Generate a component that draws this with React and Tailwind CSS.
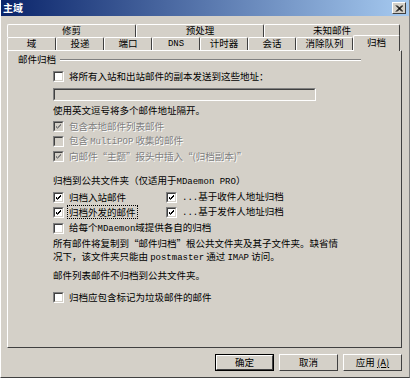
import React from 'react';

const Check = ({ checked, disabled }) => (
    <span
        className={`relative inline-block w-[11px] h-[11px] shrink-0 border border-t-[#808080] border-l-[#808080] border-b-white border-r-white ${disabled ? 'bg-[#d4d0c8]' : 'bg-white'}`}
    >
        <span className="absolute inset-0 border border-t-[#404040] border-l-[#404040] border-b-[#d4d0c8] border-r-[#d4d0c8]" />
        {checked && (
            <svg viewBox="0 0 9 9" className="absolute left-0 top-0 w-[9px] h-[9px]">
                <path
                    d="M2 4 L3.5 5.5 L7 2 M2 5 L3.5 6.5 L7 3"
                    fill="none"
                    stroke={disabled ? '#808080' : '#000'}
                    strokeWidth="1"
                />
            </svg>
        )}
    </span>
);

const Row = ({ checked, disabled, focus, children, className = '' }) => (
    <div className={`flex items-center h-[14px] ${className}`}>
        <Check checked={checked} disabled={disabled} />
        <span
            className={`ml-[3px] px-[1px] leading-[12px] ${focus ? 'border border-dotted border-black' : 'border border-transparent'} ${disabled ? 'text-[#808080] [text-shadow:1px_1px_0_#fff]' : 'text-black'}`}
        >
            {children}
        </span>
    </div>
);

const Mono = ({ children }) => <span className="font-['Liberation_Mono',monospace] text-[9px]">{children}</span>;

const Tab = ({ label, w }) => (
    <div
        className={`${w} h-[13px] flex items-center justify-center border-t border-l border-white border-r border-r-[#404040] rounded-t-[2px] leading-none`}
    >
        {label}
    </div>
);

const Button = ({ label, primary }) => (
    <div className={`w-[59px] h-[17px] ${primary ? 'border border-black' : ''}`}>
        <div className="w-full h-full flex items-center justify-center border border-t-white border-l-white border-b-[#404040] border-r-[#404040] bg-[#d4d0c8] leading-none">
            {label}
        </div>
    </div>
);

export default function App() {
    return (
        <div className="w-[410px] h-[378px] bg-[#d4d0c8] border-l border-l-white border-r border-r-[#808080] border-b border-b-[#404040] overflow-hidden text-[9.5px] text-black font-['Noto_Sans_CJK_SC',sans-serif]">
            {/* Title bar */}
            <div className="h-[16px] flex items-center justify-between pl-[2px] pr-[3px] bg-[linear-gradient(to_right,#0a246a,#a6caf0)]">
                <span className="text-white font-bold text-[10px] leading-none">主域</span>
                <div className="w-[14px] h-[12px] bg-[#d4d0c8] border border-t-white border-l-white border-b-[#404040] border-r-[#404040] flex items-center justify-center">
                    <svg viewBox="0 0 8 7" className="w-[8px] h-[7px]">
                        <path d="M1 0.5 L7 6.5 M7 0.5 L1 6.5 M2 0.5 L8 6.5 M8 0.5 L2 6.5" stroke="#000" strokeWidth="1" fill="none" />
                    </svg>
                </div>
            </div>

            {/* Tabs */}
            <div className="mt-[8px] ml-[6px] mr-[9px]">
                <div className="flex h-[13px]">
                    <Tab label="修剪" w="w-[129px]" />
                    <Tab label="预处理" w="w-[128px]" />
                    <Tab label="未知邮件" w="w-[136px]" />
                </div>
                <div className="flex items-end h-[13px]">
                    <Tab label="域" w="w-[49px]" />
                    <Tab label="投递" w="w-[48px]" />
                    <Tab label="端口" w="w-[48px]" />
                    <Tab label={<Mono>DNS</Mono>} w="w-[48px]" />
                    <Tab label="计时器" w="w-[48px]" />
                    <Tab label="会话" w="w-[48px]" />
                    <Tab label="消除队列" w="w-[57px]" />
                    <div className="relative z-10 w-[47px] h-[16px] -mb-[1px] flex items-center justify-center border-t border-l border-white border-r border-r-[#404040] rounded-t-[2px] bg-[#d4d0c8] leading-none pb-[1px]">
                        归档
                    </div>
                </div>
            </div>

            {/* Panel */}
            <div className="ml-[6px] mr-[7px] h-[298px] border border-t-white border-l-white border-b-[#404040] border-r-[#404040]">
                <div className="flex items-center h-[14px] mt-[2px] pl-[10px]">
                    <span className="leading-none">邮件归档</span>
                    <div className="ml-[4px] w-[301px] border-t border-t-[#808080] border-b border-b-white" />
                </div>

                <div className="pl-[45px]">
                    <Row className="mt-[2px]">将所有入站和出站邮件的副本发送到这些地址：</Row>
                    <div className="mt-[5px] w-[263px] h-[13px] bg-[#d4d0c8] border border-t-[#808080] border-l-[#808080] border-b-white border-r-white">
                        <div className="w-full h-full border border-t-[#404040] border-l-[#404040] border-b-[#d4d0c8] border-r-[#d4d0c8]" />
                    </div>
                    <div className="mt-[2px] h-[14px] flex items-center">
                        <span>使用英文逗号将多个邮件地址隔开。</span>
                    </div>
                    <Row className="mt-[2px]" checked disabled>包含本地邮件列表邮件</Row>
                    <Row className="mt-[1px]" disabled>包含 <Mono>MultiPOP</Mono> 收集的邮件</Row>
                    <Row className="mt-[1px]" checked disabled>向邮件“主题”报头中插入“(归档副本)”</Row>

                    <div className="mt-[11px] h-[14px] flex items-center">
                        <span>归档到公共文件夹（仅适用于<Mono>MDaemon PRO</Mono>）</span>
                    </div>
                    <div className="mt-[2px] grid grid-cols-[113px_1fr]">
                        <Row checked>归档入站邮件</Row>
                        <Row checked><Mono>...</Mono>基于收件人地址归档</Row>
                    </div>
                    <div className="mt-[1px] grid grid-cols-[113px_1fr]">
                        <Row checked focus>归档外发的邮件</Row>
                        <Row checked><Mono>...</Mono>基于发件人地址归档</Row>
                    </div>
                    <Row className="mt-[2px]">给每个<Mono>MDaemon</Mono>域提供各自的归档</Row>

                    <p className="mt-[2px] leading-[13px] w-[300px]">
                        所有邮件将复制到“邮件归档”根公共文件夹及其子文件夹。缺省情
                        <br />
                        况下，该文件夹只能由 <Mono>postmaster</Mono> 通过 <Mono>IMAP</Mono> 访问。
                    </p>
                    <div className="mt-[3px] h-[14px] flex items-center">
                        <span>邮件列表邮件不归档到公共文件夹。</span>
                    </div>
                    <Row className="mt-[8px]">归档应包含标记为垃圾邮件的邮件</Row>
                </div>
            </div>

            {/* Buttons */}
            <div className="mt-[6px] mr-[7px] flex justify-end gap-[5px]">
                <Button label="确定" primary />
                <Button label="取消" />
                <Button label={<span>应用 <span className="underline">(A)</span></span>} />
            </div>
        </div>
    );
}
